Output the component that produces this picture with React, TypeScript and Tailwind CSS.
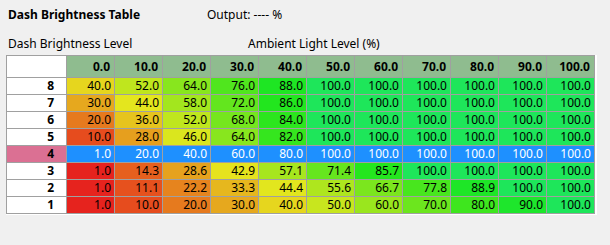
const COLS = [0, 10, 20, 30, 40, 50, 60, 70, 80, 90, 100]

const ROWS: Array<{ level: number; values: number[] }> = [
  { level: 8, values: [40, 52, 64, 76, 88, 100, 100, 100, 100, 100, 100] },
  { level: 7, values: [30, 44, 58, 72, 86, 100, 100, 100, 100, 100, 100] },
  { level: 6, values: [20, 36, 52, 68, 84, 100, 100, 100, 100, 100, 100] },
  { level: 5, values: [10, 28, 46, 64, 82, 100, 100, 100, 100, 100, 100] },
  { level: 4, values: [1, 20, 40, 60, 80, 100, 100, 100, 100, 100, 100] },
  { level: 3, values: [1, 14.3, 28.6, 42.9, 57.1, 71.4, 85.7, 100, 100, 100, 100] },
  { level: 2, values: [1, 11.1, 22.2, 33.3, 44.4, 55.6, 66.7, 77.8, 88.9, 100, 100] },
  { level: 1, values: [1, 10, 20, 30, 40, 50, 60, 70, 80, 90, 100] },
]

const SELECTED = 4

// red (0) -> yellow -> green (100)
function cellColor(v: number) {
  return `hsl(${v * 1.38}, 80%, 51%)`
}

export default function App() {
  return (
    <div className="w-[610px] h-[245px] bg-[#f0f0f0] text-[12px] text-black font-['Noto_Sans','Open_Sans',sans-serif] overflow-hidden">
      <div className="flex items-center h-[16px] mt-[7px] pl-[8px]">
        <span className="w-[199px] font-bold">Dash Brightness Table</span>
        <span>Output: ---- %</span>
      </div>
      <div className="flex items-center h-[16px] mt-[13px] pl-[8px]">
        <span className="w-[240px]">Dash Brightness Level</span>
        <span>Ambient Light Level (%)</span>
      </div>

      <div className="ml-[6px] mt-[3px] w-fit border-r-2 border-b border-white">
        <div className="grid grid-cols-[59px_repeat(11,47px)] grid-rows-[21px_repeat(8,16px)] gap-px p-px bg-[#a0a0a0] leading-none">
          <div className="bg-white" />
          {COLS.map((c) => (
            <div key={c} className="bg-[#8fbc8f] font-bold flex items-center justify-end pr-[4px]">
              {c.toFixed(1)}
            </div>
          ))}

          {ROWS.map((row) => {
            const sel = row.level === SELECTED
            return [
              <div
                key={`l${row.level}`}
                className={`${sel ? 'bg-[#db7093]' : 'bg-white'} font-bold flex items-center justify-end pr-[12px]`}
              >
                {row.level}
              </div>,
              ...row.values.map((v, i) => (
                <div
                  key={`${row.level}-${i}`}
                  className={`${sel ? 'bg-[#1e90ff] text-white' : ''} flex items-center justify-end pr-[3px]`}
                  style={sel ? undefined : { backgroundColor: cellColor(v) }}
                >
                  {v.toFixed(1)}
                </div>
              )),
            ]
          })}
        </div>
      </div>
    </div>
  )
}
